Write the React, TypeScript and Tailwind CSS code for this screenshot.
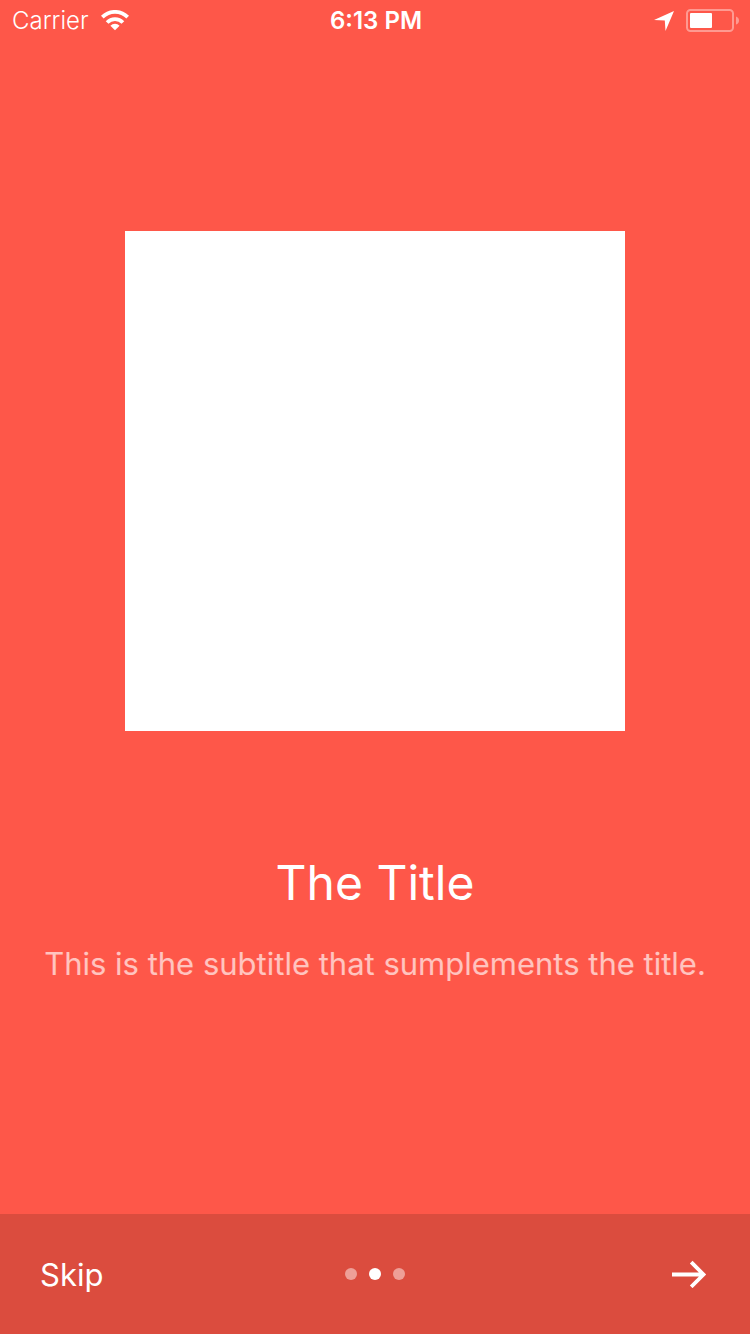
export default function App() {
  return (
    <div className="flex min-h-screen flex-col bg-[#fe5749] font-['Inter',sans-serif] text-white">
      <header className="grid h-[42px] grid-cols-3 items-center pl-3 pr-2.5">
        <div className="flex items-center gap-3">
          <span className="text-[24px] font-light leading-7">Carrier</span>
          <svg className="h-[22px] w-7" viewBox="0 0 28 22" fill="none" stroke="currentColor" strokeWidth="3.8" aria-label="Wi-Fi">
            <path d="M1.3 7.1a18 18 0 0 1 25.4 0" />
            <path d="M6.1 12.5a11 11 0 0 1 15.8 0" />
            <path d="M14 20.2l-4.6-4.5a6.4 6.4 0 0 1 9.2 0z" fill="currentColor" stroke="none" />
          </svg>
        </div>
        <time className="text-center text-[24px] font-semibold leading-7">6:13 PM</time>
        <div className="flex items-center justify-end gap-3">
          <svg className="h-5 w-5" viewBox="0 0 20 20" fill="currentColor" aria-label="Location">
            <path d="M20 0 11.5 20 10.8 9.5 0 9z" />
          </svg>
          <svg className="h-6 w-[54px]" viewBox="0 0 54 24" fill="none" aria-label="Battery">
            <rect x="1" y="1" width="46" height="21" rx="3.5" stroke="currentColor" strokeWidth="2" opacity=".4" />
            <rect x="4" y="4" width="22" height="15" rx="1" fill="currentColor" />
            <path d="M50 7.5v8q3-1 3-4t-3-4z" fill="currentColor" opacity=".4" />
          </svg>
        </div>
      </header>
      <main className="flex flex-1 flex-col items-center pt-[189px]">
        <div className="aspect-square w-2/3 bg-white" />
        <h1 className="mt-[122px] text-[48px] leading-[60px]">The Title</h1>
        <p className="mt-[31px] text-[31px] leading-10 text-white/65">This is the subtitle that sumplements the title.</p>
      </main>
      <footer className="grid h-[120px] grid-cols-3 items-center bg-[#db4c3e] px-10">
        <button type="button" className="justify-self-start pt-0.5 text-[31px] leading-10">Skip</button>
        <div className="flex justify-center gap-3">
          <span className="size-3 rounded-full bg-[#ee9f97]" />
          <span className="size-3 rounded-full bg-white" />
          <span className="size-3 rounded-full bg-[#ee9f97]" />
        </div>
        <button type="button" aria-label="Next" className="justify-self-end">
          <svg className="h-7 w-[38px]" viewBox="0 0 38 28" fill="none" stroke="currentColor" strokeWidth="3.8">
            <path d="M0 14.5h31.5M19.2 2.2l12.3 12.3-12.3 12.3" />
          </svg>
        </button>
      </footer>
    </div>
  );
}
